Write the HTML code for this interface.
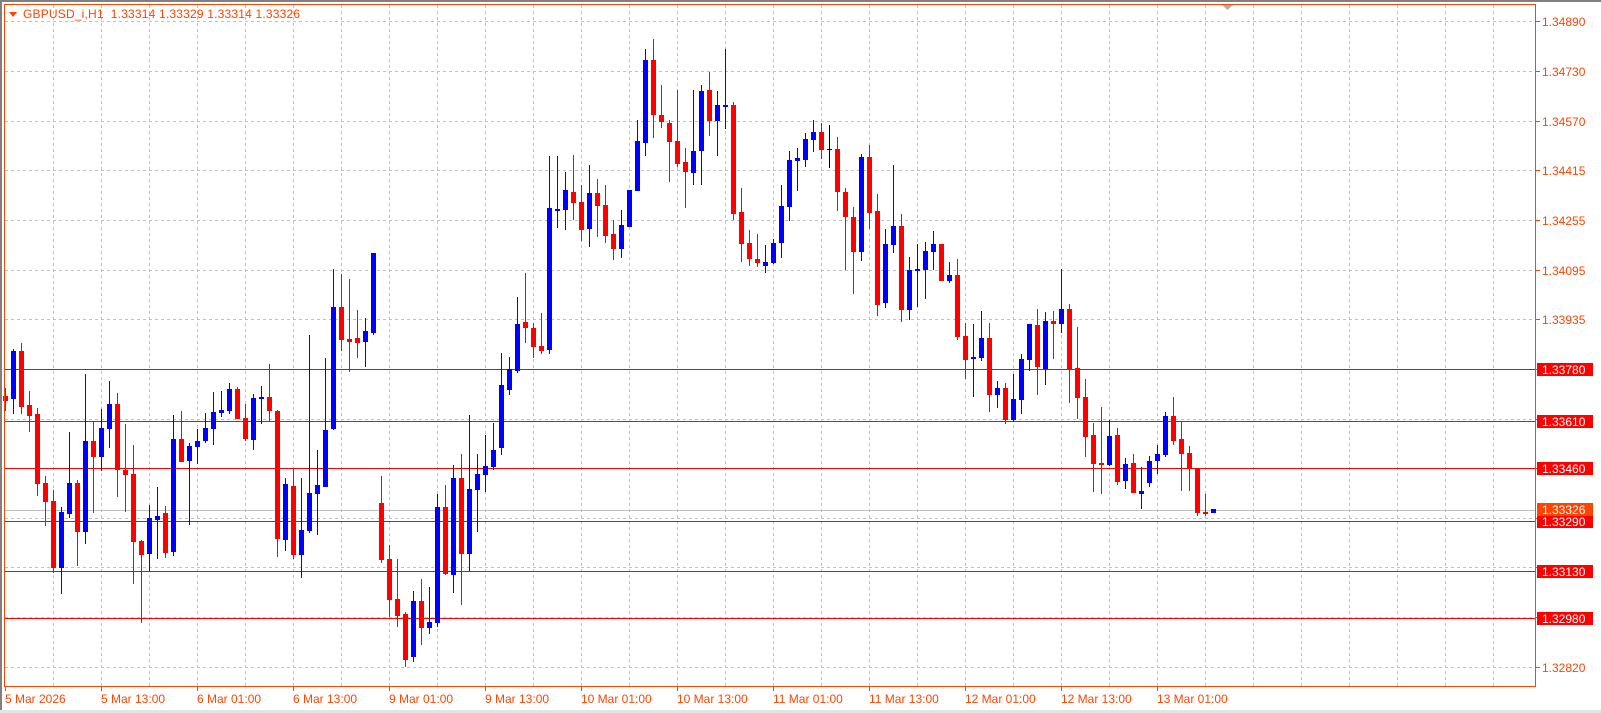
<!DOCTYPE html>
<html><head><meta charset="utf-8"><style>
html,body{margin:0;padding:0;background:#fff;width:1601px;height:713px;overflow:hidden}
svg{display:block}
text{font-family:"Liberation Sans","DejaVu Sans",sans-serif;font-size:12px}
</style></head><body>
<svg id="s" width="1601" height="713" xmlns="http://www.w3.org/2000/svg">
<rect x="0" y="0" width="1601" height="713" fill="#fff"/>
<rect x="0" y="0" width="1601" height="2" fill="#808080"/>
<rect x="0" y="0" width="2" height="713" fill="#808080"/>
<rect x="0" y="710" width="1601" height="3" fill="#e4e4e4"/>
<g id="grid" stroke="#c0c0c0" stroke-width="1" stroke-dasharray="3,3"></g>
<g id="lines"></g>
<g id="candles"></g>
<rect x="4.5" y="4.5" width="1531" height="682" fill="none" stroke="#ff4400" stroke-width="1"/>
<polygon points="1222,5 1233,5 1227.5,10" fill="#b0b0b0"/>
<polygon points="9,12 17,12 13,17" fill="#ff4400"/>
<text x="23" y="18" fill="#ff4400" style="white-space:pre" xml:space="preserve" textLength="277">GBPUSD_i,H1  1.33314 1.33329 1.33314 1.33326</text>
<g id="axis" fill="#ff4400"></g>
<g id="labels"></g>
</svg>
<script>
var NS="http://www.w3.org/2000/svg";
function el(p,t,a,txt){var e=document.createElementNS(NS,t);for(var k in a)e.setAttribute(k,a[k]);if(txt!=null)e.textContent=txt;p.appendChild(e);return e;}
var g=document.getElementById('grid');
for(var k=0;k<14;k++){var y=Math.round(21.3+49.65*k)+0.5;el(g,'line',{x1:5,x2:1535,y1:y,y2:y});}
for(var k=0;k<31;k++){var x=Math.round(53.3+48*k)+0.5;el(g,'line',{x1:x,x2:x,y1:5,y2:686});}
var ax=document.getElementById('axis');
var prices=["1.34890","1.34730","1.34570","1.34415","1.34255","1.34095","1.33935","1.33780","1.33610","1.33460","1.33290","1.33130","1.32980","1.32820"];
for(var k=0;k<14;k++){var y=Math.round(21.3+49.65*k);el(ax,'rect',{x:1536,y:y,width:4,height:1});if(k<7||k>12)el(ax,'text',{x:1542,y:y+5},prices[k]);}
var dates=["5 Mar 2026","5 Mar 13:00","6 Mar 01:00","6 Mar 13:00","9 Mar 01:00","9 Mar 13:00","10 Mar 01:00","10 Mar 13:00","11 Mar 01:00","11 Mar 13:00","12 Mar 01:00","12 Mar 13:00","13 Mar 01:00"];
for(var k=0;k<13;k++){var x=5+96*k;el(ax,'rect',{x:x,y:687,width:1,height:4});el(ax,'text',{x:x,y:703},dates[k]);}
var L=document.getElementById('lines');
el(L,'rect',{x:5,y:510,width:1530,height:1,fill:'#c0c0c0'});
var red=[[369,"1.33780"],[421,"1.33610"],[468,"1.33460"],[521,"1.33290"],[571,"1.33130"],[618,"1.32980"]];
var lab=document.getElementById('labels');
red.forEach(function(r){el(L,'rect',{x:5,y:r[0],width:1530,height:1,fill:'#ff0000'});el(lab,'rect',{x:1537,y:r[0]-6,width:56,height:13,fill:'#ff0000'});el(lab,'text',{x:1542,y:r[0]+5,fill:'#fff'},r[1]);});
el(lab,'rect',{x:1537,y:503,width:56,height:13,fill:'#ff4400'});el(lab,'text',{x:1542,y:514,fill:'#fff'},"1.33326");
var D=[[388,411,396,401,'r'],[349,414,351,399,'b'],[343,414,351,407,'r'],[391,432,405,416,'r'],[408,496,414,484,'r'],[476,526,483,502,'r'],[490,573,501,568,'r'],[507,594,512,568,'b'],[432,518,483,514,'b'],[480,566,483,532,'r'],
[374,544,441,532,'b'],[421,513,441,457,'r'],[409,471,428,457,'b'],[381,448,404,429,'b'],[393,497,404,470,'r'],[424,512,470,475,'r'],[445,584,474,542,'r'],[540,623,541,555,'r'],[505,571,518,554,'b'],[487,559,516,520,'b'],
[506,558,513,553,'r'],[415,556,439,552,'b'],[411,462,439,462,'r'],[443,525,446,461,'b'],[429,464,441,447,'b'],[413,443,428,441,'b'],[392,445,412,429,'b'],[391,417,410,413,'b'],[383,414,389,411,'b'],[387,419,389,419,'r'],
[404,441,418,439,'r'],[394,450,398,440,'b'],[386,424,397,399,'b'],[364,422,397,411,'r'],[410,557,411,539,'r'],[478,551,484,540,'b'],[469,559,486,555,'r'],[478,578,530,555,'b'],[335,533,493,531,'b'],[450,535,485,494,'b'],
[358,487,430,487,'b'],[269,430,307,429,'b'],[274,351,307,340,'r'],[279,372,339,342,'r'],[310,358,338,343,'r'],[318,367,331,342,'b'],[253,335,253,333,'b'],[476,563,503,560,'r'],[545,617,559,600,'r'],[559,627,599,616,'r'],
[612,667,614,660,'r'],[591,662,601,657,'b'],[579,645,601,628,'r'],[587,634,622,628,'b'],[494,627,507,623,'b'],[485,575,507,574,'r'],[465,593,478,575,'b'],[454,605,478,554,'r'],[415,571,489,554,'b'],[454,532,474,490,'b'],
[435,492,466,475,'b'],[423,470,450,467,'b'],[353,455,385,448,'b'],[357,395,369,390,'b'],[297,373,324,371,'b'],[273,343,322,328,'r'],[323,358,328,347,'r'],[313,354,346,351,'r'],[156,354,208,350,'b'],[156,228,209,211,'b'],
[172,230,190,210,'b'],[155,220,192,203,'r'],[185,241,202,230,'r'],[165,247,193,229,'b'],[179,237,193,206,'r'],[185,243,205,236,'r'],[220,260,234,249,'r'],[210,258,225,249,'b'],[190,227,190,227,'b'],[120,191,141,191,'b'],
[49,156,60,143,'b'],[39,138,60,115,'r'],[85,128,115,122,'r'],[120,182,123,142,'r'],[90,167,141,164,'r'],[148,208,162,172,'r'],[90,185,151,173,'b'],[85,185,91,151,'b'],[72,136,90,121,'r'],[91,156,105,121,'b'],
[49,129,105,107,'b'],[102,220,105,214,'r'],[188,262,212,244,'r'],[230,266,243,259,'r'],[234,267,259,263,'r'],[245,273,262,266,'b'],[239,264,243,263,'b'],[185,258,206,243,'b'],[151,221,160,207,'b'],[148,191,158,161,'b'],
[133,167,139,160,'b'],[120,152,132,140,'b'],[123,159,132,150,'r'],[125,168,149,150,'k'],[137,211,149,192,'r'],[188,270,192,217,'r'],[207,294,217,252,'r'],[154,261,157,252,'b'],[145,229,157,213,'r'],[194,316,211,305,'r'],
[229,308,244,303,'b'],[165,253,226,245,'b'],[214,322,226,310,'r'],[257,320,270,310,'b'],[244,307,269,270,'b'],[242,299,251,270,'b'],[231,270,244,252,'b'],[244,281,244,281,'r'],[262,283,275,281,'b'],[259,340,275,337,'r'],
[323,379,336,360,'r'],[324,397,357,359,'b'],[311,361,338,358,'b'],[323,412,338,395,'r'],[381,408,388,395,'b'],[383,424,388,420,'r'],[374,422,399,420,'b'],[354,414,359,400,'b'],[324,371,324,360,'b'],[309,395,325,367,'r'],
[312,385,321,369,'b'],[311,359,321,324,'r'],[269,333,309,324,'b'],[304,403,309,370,'r'],[327,419,368,398,'r'],[379,457,397,437,'r'],[423,492,435,464,'r'],[407,494,463,464,'r'],[420,466,436,465,'b'],[428,485,435,482,'r'],
[458,489,464,481,'b'],[454,493,463,493,'r'],[467,509,491,494,'b'],[456,487,461,483,'b'],[445,474,454,461,'b'],[412,457,416,455,'b'],[397,445,416,441,'r'],[422,491,439,454,'r'],[446,491,453,469,'r'],[469,516,469,513,'r'],
[494,516,512,514,'r'],[509,513,509,513,'b']];
var C={r:'#ff0000',b:'#0000ff',k:'#000000'};
var cg=document.getElementById('candles');
D.forEach(function(d,i){var c=C[d[4]];var x=5+8*i;
el(cg,'rect',{x:x,y:d[0],width:1,height:Math.max(1,d[1]-d[0]),fill:c});
var h=d[3]-d[2];if(h<2){h=2;}
if(d[4]=='k'){el(cg,'rect',{x:x-2,y:d[2],width:5,height:1,fill:c});}
else el(cg,'rect',{x:x-2,y:d[2],width:5,height:h,fill:c});});
</script>
</body></html>
